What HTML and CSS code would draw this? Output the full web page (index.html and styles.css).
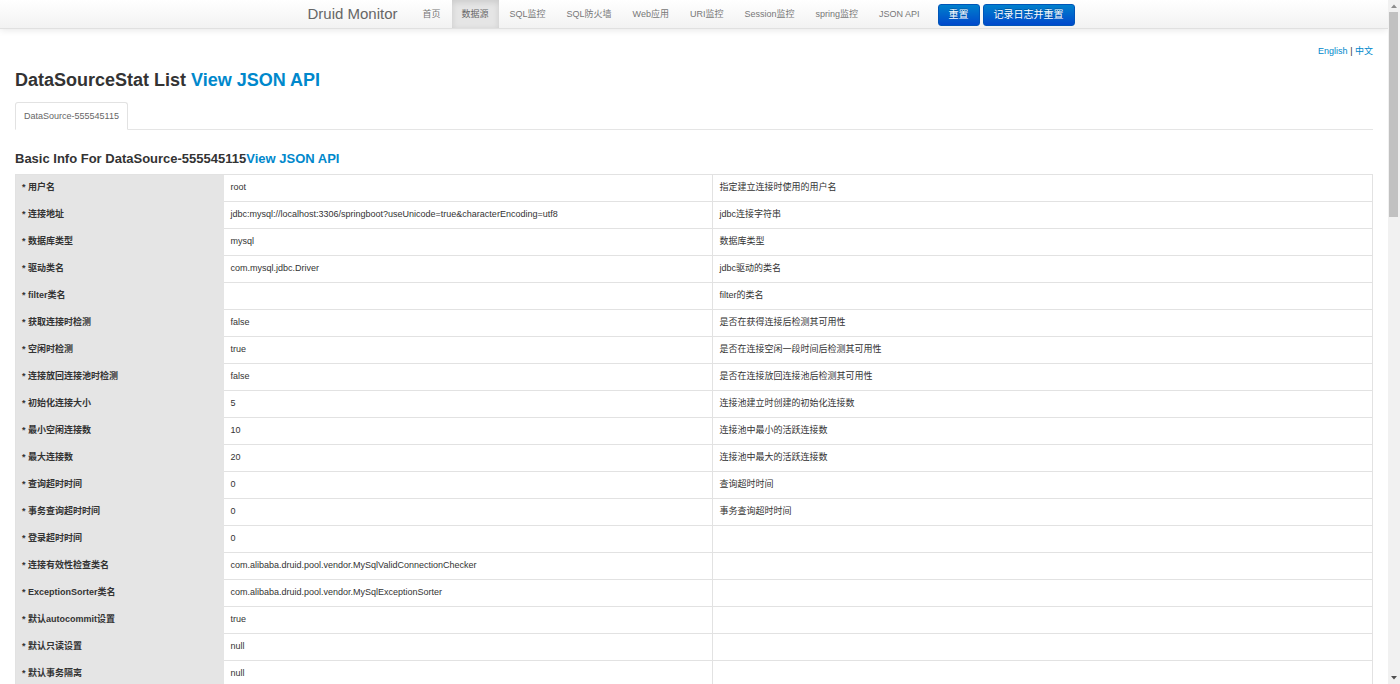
FILE: index.html
```html
<!DOCTYPE html>
<html lang="zh-CN">
<head>
<meta charset="utf-8">
<title>Druid DataSourceStat</title>
<link rel="stylesheet" href="styles.css">
</head>
<body>
<header class="navbar">
  <div class="navbar-inner">
    <a class="brand" href="#">Druid Monitor</a>
    <nav class="nav">
      <a href="#">首页</a>
      <a href="#" class="active">数据源</a>
      <a href="#">SQL监控</a>
      <a href="#">SQL防火墙</a>
      <a href="#">Web应用</a>
      <a href="#">URI监控</a>
      <a href="#">Session监控</a>
      <a href="#">spring监控</a>
      <a href="#">JSON API</a>
    </nav>
    <div class="actions">
      <button type="button" class="btn">重置</button>
      <button type="button" class="btn">记录日志并重置</button>
    </div>
  </div>
</header>
<main class="content">
  <div class="lang"><a href="#">English</a> | <a href="#">中文</a></div>
  <h1 class="title">DataSourceStat List <a href="#">View JSON API</a></h1>
  <div class="tabs"><a class="tab" href="#">DataSource-555545115</a></div>
  <h2 class="subtitle">Basic Info For DataSource-555545115<a href="#">View JSON API</a></h2>
  <table class="info">
    <colgroup><col class="col-name"><col class="col-value"><col></colgroup>
    <tbody>
      <tr><th scope="row">* 用户名</th><td>root</td><td>指定建立连接时使用的用户名</td></tr>
      <tr><th scope="row">* 连接地址</th><td>jdbc:mysql://localhost:3306/springboot?useUnicode=true&amp;characterEncoding=utf8</td><td>jdbc连接字符串</td></tr>
      <tr><th scope="row">* 数据库类型</th><td>mysql</td><td>数据库类型</td></tr>
      <tr><th scope="row">* 驱动类名</th><td>com.mysql.jdbc.Driver</td><td>jdbc驱动的类名</td></tr>
      <tr><th scope="row">* filter类名</th><td></td><td>filter的类名</td></tr>
      <tr><th scope="row">* 获取连接时检测</th><td>false</td><td>是否在获得连接后检测其可用性</td></tr>
      <tr><th scope="row">* 空闲时检测</th><td>true</td><td>是否在连接空闲一段时间后检测其可用性</td></tr>
      <tr><th scope="row">* 连接放回连接池时检测</th><td>false</td><td>是否在连接放回连接池后检测其可用性</td></tr>
      <tr><th scope="row">* 初始化连接大小</th><td>5</td><td>连接池建立时创建的初始化连接数</td></tr>
      <tr><th scope="row">* 最小空闲连接数</th><td>10</td><td>连接池中最小的活跃连接数</td></tr>
      <tr><th scope="row">* 最大连接数</th><td>20</td><td>连接池中最大的活跃连接数</td></tr>
      <tr><th scope="row">* 查询超时时间</th><td>0</td><td>查询超时时间</td></tr>
      <tr><th scope="row">* 事务查询超时时间</th><td>0</td><td>事务查询超时时间</td></tr>
      <tr><th scope="row">* 登录超时时间</th><td>0</td><td></td></tr>
      <tr><th scope="row">* 连接有效性检查类名</th><td>com.alibaba.druid.pool.vendor.MySqlValidConnectionChecker</td><td></td></tr>
      <tr><th scope="row">* ExceptionSorter类名</th><td>com.alibaba.druid.pool.vendor.MySqlExceptionSorter</td><td></td></tr>
      <tr><th scope="row">* 默认autocommit设置</th><td>true</td><td></td></tr>
      <tr><th scope="row">* 默认只读设置</th><td>null</td><td></td></tr>
      <tr><th scope="row">* 默认事务隔离</th><td>null</td><td></td></tr>
    </tbody>
  </table>
</main>
<div class="scrollbar" aria-hidden="true">
  <svg width="12" height="12" viewBox="0 0 12 12"><path d="M3 8 L6 4.500 L9 8 Z" fill="#8b8b8b"/></svg>
  <div class="thumb"></div>
  <svg class="down" width="12" height="12" viewBox="0 0 12 12"><path d="M3 4 L6 7.500 L9 4 Z" fill="#505050"/></svg>
</div>
</body>
</html>
```
FILE: styles.css
```css
* { box-sizing: border-box; }
body {
  margin: 0;
  height: 100vh;
  overflow: hidden;
  padding-right: 12px;
  background: #fff;
  color: #333;
  font: 9px/18px "Liberation Sans", "Noto Sans CJK SC", sans-serif;
}
a { color: #0088cc; text-decoration: none; }
.navbar {
  background: linear-gradient(#fff, #f2f2f2);
  border-bottom: 1px solid #e0e0e0;
  box-shadow: 0 1px 7px rgba(0, 0, 0, .1);
}
.navbar-inner {
  display: flex;
  justify-content: center;
  height: 28px;
  padding-right: 6px;
  white-space: nowrap;
}
.brand {
  padding-right: 15px;
  color: #666;
  font-size: 15px;
  line-height: 28px;
}
.nav { display: flex; gap: 1px; }
.nav a { padding: 0 10px; color: #777; line-height: 28px; }
.nav .active {
  background: #e5e5e5;
  color: #666;
  box-shadow: inset 0 2px 6px rgba(0, 0, 0, .12);
}
.actions { display: flex; gap: 3px; padding: 4px 0 0 8px; }
.btn {
  height: 22px;
  padding: 0 10px;
  border: 1px solid #0055b8;
  border-radius: 3px;
  background: linear-gradient(#0080cc, #0048cc);
  color: #fff;
  font: 10px/20px "Liberation Sans", "Noto Sans CJK SC", sans-serif;
  text-shadow: 0 -1px 0 rgba(0, 0, 0, .25);
}
.content { padding: 13px 15px 0; }
.lang { text-align: right; }
.title { margin: 7px 0 0; font-size: 18px; line-height: 26px; }
.tabs {
  display: flex;
  margin-top: 9px;
  border-bottom: 1px solid #e5e5e5;
}
.tab {
  margin-bottom: -1px;
  padding: 4px 8px;
  border: 1px solid #e2e2e2;
  border-bottom-color: #fff;
  border-radius: 3px 3px 0 0;
  background: #fff;
  color: #666;
}
.subtitle { margin: 14px 0 0; font-size: 13px; line-height: 30px; }
.info {
  width: 100%;
  table-layout: fixed;
  border-collapse: collapse;
  border: 1px solid #e2e2e2;
}
.col-name { width: 15.4%; }
.col-value { width: 36%; }
.info th, .info td {
  height: 27px;
  padding: 3px 6px 5px;
  text-align: left;
  white-space: nowrap;
}
.info td { border: 1px solid #e2e2e2; }
.info td:nth-child(2) { border-left: 0; }
.info th { background: #e5e5e5; }
.scrollbar {
  position: fixed;
  top: 0;
  right: 0;
  bottom: 0;
  display: flex;
  flex-direction: column;
  width: 12px;
  background: #f1f1f1;
}
.thumb { height: 30%; margin: 0 2px 0 1px; background: #c1c1c1; }
.down { margin-top: auto; }
```
